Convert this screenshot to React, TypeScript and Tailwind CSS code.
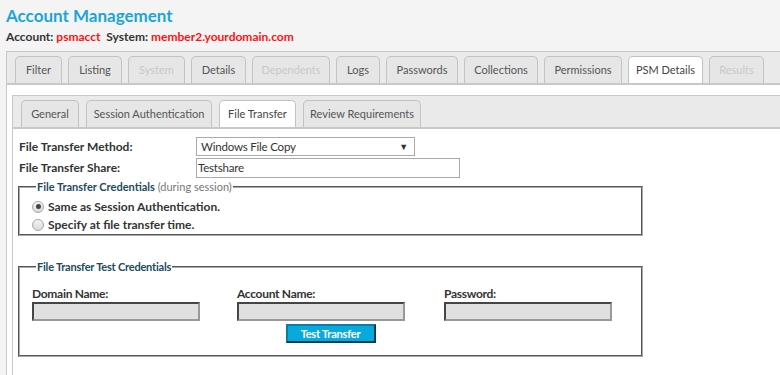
import * as React from 'react';

type Tab = { label: string; w: number; active?: boolean; disabled?: boolean };

const mainTabs: Tab[] = [
  { label: 'Filter', w: 47 },
  { label: 'Listing', w: 54 },
  { label: 'System', w: 57, disabled: true },
  { label: 'Details', w: 55 },
  { label: 'Dependents', w: 78, disabled: true },
  { label: 'Logs', w: 44 },
  { label: 'Passwords', w: 72 },
  { label: 'Collections', w: 74 },
  { label: 'Permissions', w: 78 },
  { label: 'PSM Details', w: 75, active: true },
  { label: 'Results', w: 55, disabled: true },
];

const subTabs: Tab[] = [
  { label: 'General', w: 58 },
  { label: 'Session Authentication', w: 126 },
  { label: 'File Transfer', w: 77, active: true },
  { label: 'Review Requirements', w: 118 },
];

function TabButton({ tab }: { tab: Tab }) {
  return (
    <div
      style={{ width: tab.w }}
      className={[
        'flex h-[27px] shrink-0 items-center justify-center rounded-t-[5px] border border-b-0 border-[#c2c2c2] text-[11px]',
        tab.active ? 'bg-white text-[#444]' : 'bg-[#e6e6e6]',
        tab.disabled ? 'text-[#c9c9c9]' : tab.active ? '' : 'text-[#555]',
      ].join(' ')}
    >
      {tab.label}
    </div>
  );
}

function Radio({ checked }: { checked?: boolean }) {
  return (
    <span className="flex h-[12px] w-[12px] shrink-0 items-center justify-center rounded-full border border-[#a8a8a8] bg-gradient-to-b from-[#f4f4f4] to-[#d9d9d9]">
      {checked ? <span className="h-[5px] w-[5px] rounded-full bg-[#444]" /> : null}
    </span>
  );
}

function GrayInput() {
  return <div className="h-[19px] w-[168px] border-2 border-[#999] bg-[#e0e0e0] [border-style:inset]" />;
}

export default function App() {
  return (
    <div className="h-[375px] overflow-hidden bg-[#f4f4f4] font-['Lato',sans-serif] text-[#333]">
      {/* Header */}
      <div className="px-[6px] pt-[5px]">
        <h1 className="text-[17px] font-bold leading-[22px] text-[#1ba5d9]">Account Management</h1>
        <p className="mt-[2px] text-[12px] font-bold leading-[16px]">
          Account: <span className="text-[#ff1111]">psmacct</span>&nbsp; System:{' '}
          <span className="text-[#ff1111]">member2.yourdomain.com</span>
        </p>
      </div>

      {/* Outer panel */}
      <div className="ml-[6px] mt-[6px] border-l border-t border-[#c8c8c8] bg-white">
        <div className="flex gap-[6px] border-b-2 border-[#c8c8c8] bg-[#eaeaea] pl-[8px] pt-[4px]">
          {mainTabs.map((t) => (
            <TabButton key={t.label} tab={t} />
          ))}
        </div>

        <div className="pl-[5px] pt-[10px]">
          {/* Inner panel */}
          <div className="h-[300px] border-l border-t border-[#c8c8c8] bg-white">
            <div className="flex gap-[7px] border-b-2 border-[#c8c8c8] bg-[#eaeaea] pl-[8px] pt-[4px]">
              {subTabs.map((t) => (
                <TabButton key={t.label} tab={t} />
              ))}
            </div>

            <div className="pl-[6px] pt-[8px] text-[12px]">
              <div className="flex items-center">
                <label className="w-[177px] font-bold">File Transfer Method:</label>
                <div className="flex h-[19px] w-[219px] items-center justify-between border border-[#aaa] bg-white pl-[4px] pr-[6px] text-[11.5px] tracking-[-0.2px]">
                  <span>Windows File Copy</span>
                  <span className="text-[9px] text-[#333]">▼</span>
                </div>
              </div>
              <div className="mt-[2px] flex items-center">
                <label className="w-[177px] font-bold">File Transfer Share:</label>
                <div className="flex h-[20px] w-[264px] items-center border border-[#aaa] bg-white pl-[1px] text-[11.5px] tracking-[-0.2px]">
                  Testshare
                </div>
              </div>

              <fieldset className="-ml-[1px] mt-[2px] w-[625px] border-2 border-[#aaa] pl-[12px] [border-style:groove]">
                <legend className="ml-[4px] px-[1px] text-[11px] leading-[14px]">
                  <span className="font-bold text-[#214a5e]">File Transfer Credentials</span>{' '}
                  <span className="text-[#777]">(during session)</span>
                </legend>
                <div className="mt-[3px] flex items-center gap-[4px] text-[12px] font-bold leading-[19px]">
                  <Radio checked />
                  <span>Same as Session Authentication.</span>
                </div>
                <div className="flex items-center gap-[4px] text-[12px] font-bold leading-[18px]">
                  <Radio />
                  <span>Specify at file transfer time.</span>
                </div>
              </fieldset>

              <fieldset className="-ml-[1px] mt-[24px] w-[625px] border-2 border-[#aaa] pb-[12px] pl-[12px] [border-style:groove]">
                <legend className="ml-[4px] px-[1px] text-[11px] font-bold leading-[14px] tracking-[-0.2px] text-[#214a5e]">
                  File Transfer Test Credentials
                </legend>
                <div className="mt-[12px] grid grid-cols-[205px_207px_168px] text-[12px] font-bold tracking-[-0.3px]">
                  <div>
                    <div className="leading-[16px]">Domain Name:</div>
                    <GrayInput />
                  </div>
                  <div>
                    <div className="leading-[16px]">Account Name:</div>
                    <GrayInput />
                  </div>
                  <div>
                    <div className="leading-[16px]">Password:</div>
                    <GrayInput />
                  </div>
                </div>
                <div className="mt-[3px] flex justify-center pr-[12px]">
                  <button
                    type="button"
                    className="h-[19px] w-[90px] border-2 border-[#0a7fa5] bg-[#08a9dd] text-[11px] font-bold leading-none tracking-[-0.2px] text-white [border-style:outset]"
                  >
                    Test Transfer
                  </button>
                </div>
              </fieldset>
            </div>
          </div>
        </div>
      </div>
    </div>
  );
}
